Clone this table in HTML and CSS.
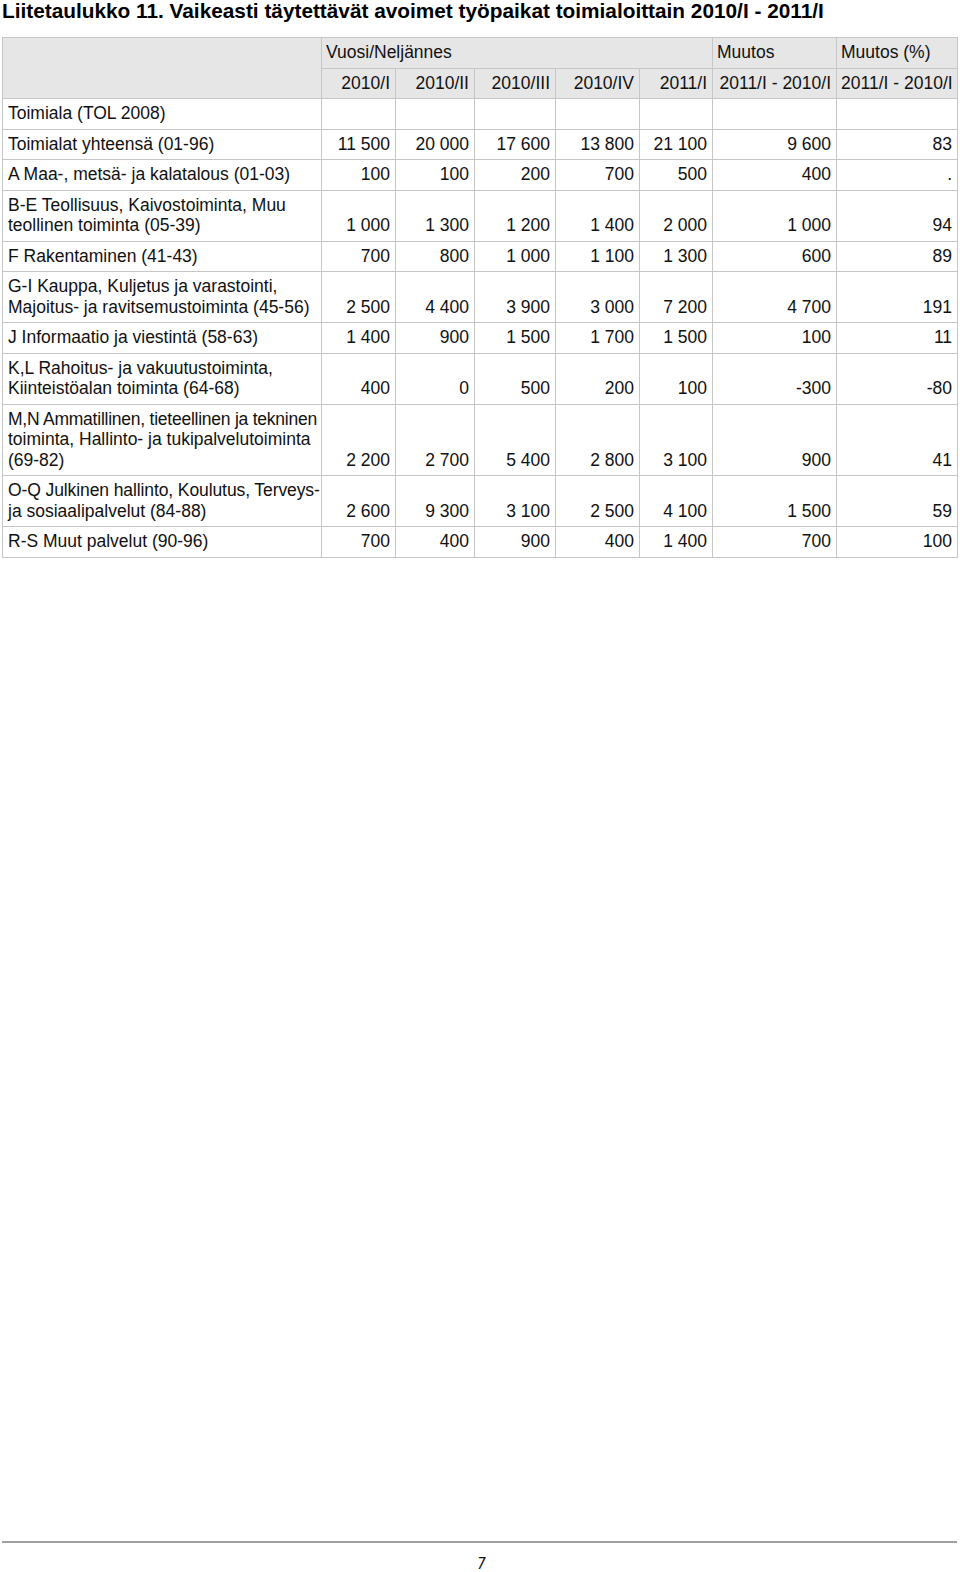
FILE: index.html
```html
<!DOCTYPE html>
<html lang="fi">
<head>
<meta charset="utf-8">
<title>Liitetaulukko 11</title>
<link rel="stylesheet" href="styles.css">
</head>
<body>
<div class="page">
  <h1 class="title">Liitetaulukko 11. Vaikeasti täytettävät avoimet työpaikat toimialoittain 2010/I - 2011/I</h1>
  <table class="data">
    <colgroup>
      <col class="c-label">
      <col class="c-q1">
      <col class="c-q2">
      <col class="c-q3">
      <col class="c-q4">
      <col class="c-q5">
      <col class="c-ch">
      <col class="c-pct">
    </colgroup>
    <thead>
      <tr>
        <th class="hd blank" rowspan="2"></th>
        <th class="hd left" colspan="5">Vuosi/Neljännes</th>
        <th class="hd left">Muutos</th>
        <th class="hd left">Muutos (%)</th>
      </tr>
      <tr>
        <th class="hd">2010/I</th>
        <th class="hd">2010/II</th>
        <th class="hd">2010/III</th>
        <th class="hd">2010/IV</th>
        <th class="hd">2011/I</th>
        <th class="hd">2011/I - 2010/I</th>
        <th class="hd">2011/I - 2010/I</th>
      </tr>
    </thead>
    <tbody>
      <tr><td class="lbl">Toimiala (TOL 2008)</td><td></td><td></td><td></td><td></td><td></td><td></td><td></td></tr>
      <tr><td class="lbl">Toimialat yhteensä (01-96)</td><td>11 500</td><td>20 000</td><td>17 600</td><td>13 800</td><td>21 100</td><td>9 600</td><td>83</td></tr>
      <tr><td class="lbl">A Maa-, metsä- ja kalatalous (01-03)</td><td>100</td><td>100</td><td>200</td><td>700</td><td>500</td><td>400</td><td>.</td></tr>
      <tr><td class="lbl">B-E Teollisuus, Kaivostoiminta, Muu<br>teollinen toiminta (05-39)</td><td>1 000</td><td>1 300</td><td>1 200</td><td>1 400</td><td>2 000</td><td>1 000</td><td>94</td></tr>
      <tr><td class="lbl">F Rakentaminen (41-43)</td><td>700</td><td>800</td><td>1 000</td><td>1 100</td><td>1 300</td><td>600</td><td>89</td></tr>
      <tr><td class="lbl">G-I Kauppa, Kuljetus ja varastointi,<br>Majoitus- ja ravitsemustoiminta (45-56)</td><td>2 500</td><td>4 400</td><td>3 900</td><td>3 000</td><td>7 200</td><td>4 700</td><td>191</td></tr>
      <tr><td class="lbl">J Informaatio ja viestintä (58-63)</td><td>1 400</td><td>900</td><td>1 500</td><td>1 700</td><td>1 500</td><td>100</td><td>11</td></tr>
      <tr><td class="lbl">K,L Rahoitus- ja vakuutustoiminta,<br>Kiinteistöalan toiminta (64-68)</td><td>400</td><td>0</td><td>500</td><td>200</td><td>100</td><td>-300</td><td>-80</td></tr>
      <tr><td class="lbl"><span class="tight">M,N Ammatillinen, tieteellinen ja tekninen</span><br>toiminta, Hallinto- ja tukipalvelutoiminta<br>(69-82)</td><td>2 200</td><td>2 700</td><td>5 400</td><td>2 800</td><td>3 100</td><td>900</td><td>41</td></tr>
      <tr><td class="lbl"><span class="snug">O-Q Julkinen hallinto, Koulutus, Terveys-</span><br>ja sosiaalipalvelut (84-88)</td><td>2 600</td><td>9 300</td><td>3 100</td><td>2 500</td><td>4 100</td><td>1 500</td><td>59</td></tr>
      <tr><td class="lbl">R-S Muut palvelut (90-96)</td><td>700</td><td>400</td><td>900</td><td>400</td><td>1 400</td><td>700</td><td>100</td></tr>
    </tbody>
  </table>
  <footer class="foot">
    <div class="rule"></div>
    <div class="pageno">7</div>
  </footer>
</div>
</body>
</html>
```

FILE: styles.css
```css
html, body {
  margin: 0;
  padding: 0;
  background: #ffffff;
}
body {
  font-family: "Liberation Sans", Arial, sans-serif;
  color: #111111;
}
.page {
  box-sizing: border-box;
  height: 1572px;
  padding: 0 3px 0 2px;
  display: flex;
  flex-direction: column;
}
.title {
  margin: 0;
  padding-top: 0;
  font-size: 20.8px;
  line-height: 22px;
  font-weight: bold;
  color: #000;
  white-space: nowrap;
}
.data {
  margin-top: 15px;
  border-collapse: collapse;
  table-layout: fixed;
  width: 955px;
  font-size: 17.5px;
}
.c-label { width: 319px; }
.c-q1 { width: 74px; }
.c-q2 { width: 79px; }
.c-q3 { width: 81px; }
.c-q4 { width: 84px; }
.c-q5 { width: 73px; }
.c-ch { width: 124px; }
.c-pct { width: 121px; }
.data th, .data td {
  border: 1px solid #c6c6c6;
  padding: 4px 5px 5px 4px;
  line-height: 20.5px;
  height: 20px;
  vertical-align: bottom;
  text-align: right;
  white-space: nowrap;
  font-weight: normal;
}
.data .hd {
  background: #e6e6e6;
}
.data .left {
  text-align: left;
  padding-left: 4px;
}
.data td.lbl {
  text-align: left;
  padding-left: 5px;
}
.tight {
  letter-spacing: -0.24px;
}
.snug {
  letter-spacing: -0.1px;
}
.foot {
  margin-top: auto;
  padding-bottom: 0;
}
.rule {
  height: 2px;
  background: #a0a0a0;
  margin-bottom: 13px;
}
.pageno {
  height: 16px;
  text-align: center;
  font-family: "DejaVu Sans Condensed", "Liberation Sans", sans-serif;
  font-style: italic;
  font-size: 15px;
  line-height: 16px;
  padding-left: 4px;
}
```
